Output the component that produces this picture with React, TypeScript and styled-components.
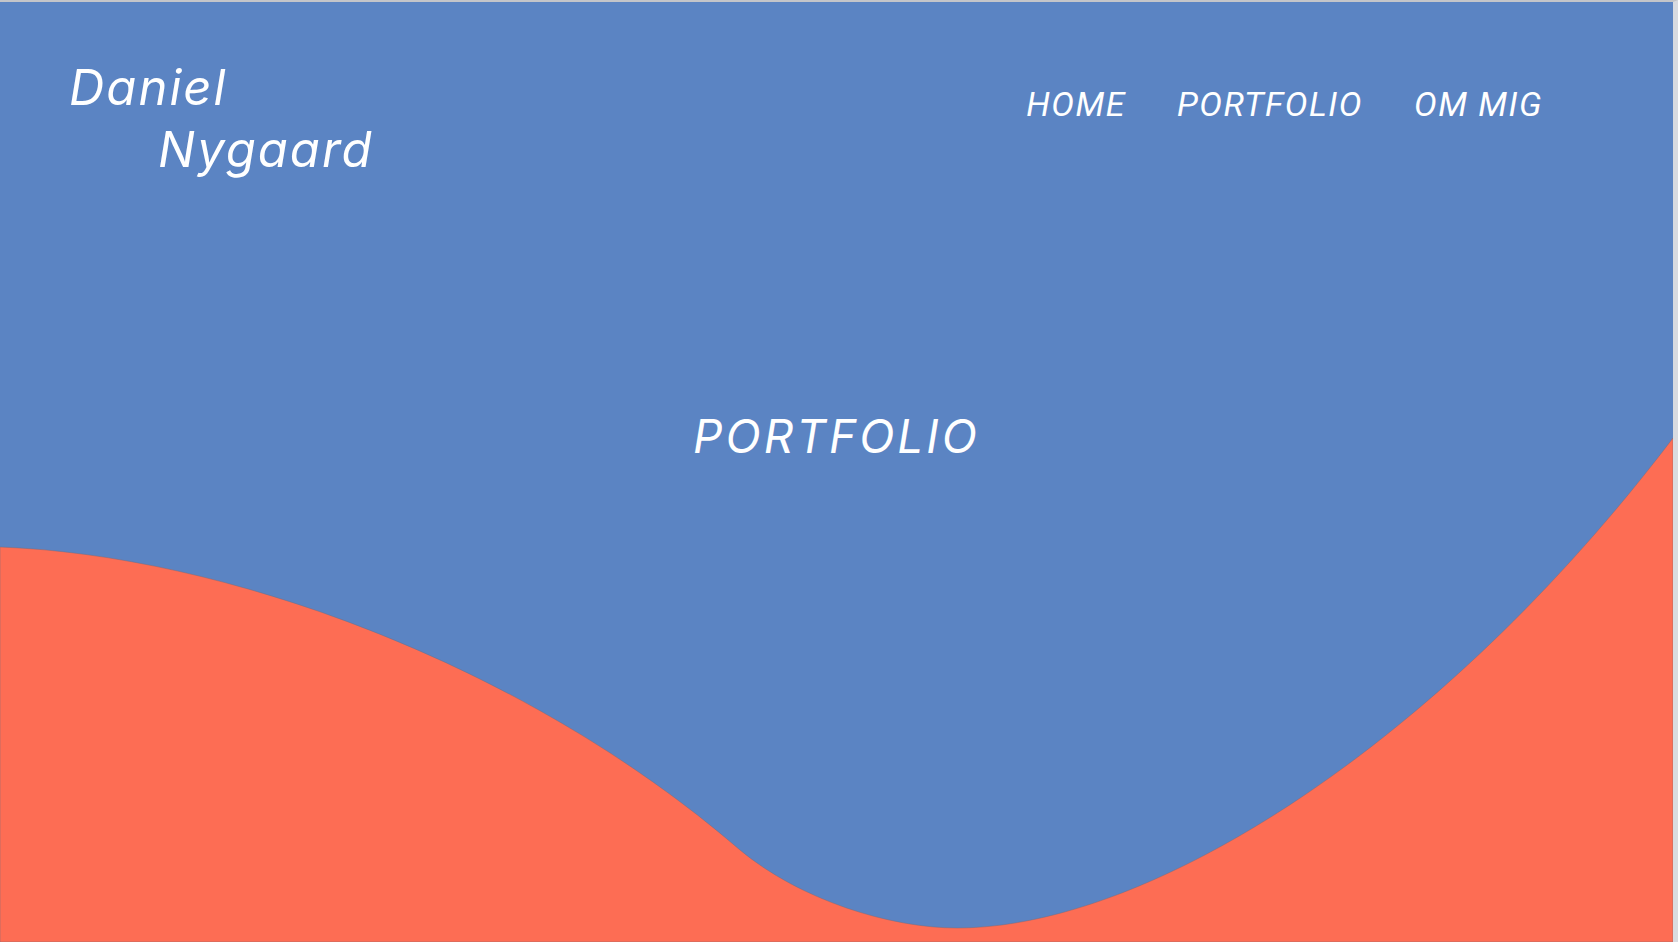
import styled, { createGlobalStyle } from "styled-components";

const GlobalStyle = createGlobalStyle`
  html, body {
    margin: 0;
    padding: 0;
    overflow: hidden;
  }
  * {
    box-sizing: border-box;
  }
`;

const Page = styled.div`
  position: relative;
  width: 100%;
  height: 100vh;
  overflow: hidden;
  background: #5b84c3;
  border-top: 2px solid #c4c5c9;
  border-right: 5px solid #d9dbe0;
  font-family: Inter, "Open Sans", sans-serif;
  color: #ffffff;
`;

// decorative background wave, sits under the content
const Wave = styled.svg`
  position: absolute;
  left: 0;
  bottom: 0;
  width: 100%;
  height: 100%;
  display: block;
`;

const Content = styled.div`
  position: relative;
  z-index: 1;
  display: flex;
  flex-direction: column;
`;

const Header = styled.header`
  display: flex;
  justify-content: space-between;
  align-items: flex-start;
  padding: 55px 130px 0 69px;
`;

const Logo = styled.div`
  display: flex;
  flex-direction: column;
  font-size: 49px;
  font-style: italic;
  letter-spacing: 2px;
  line-height: 62px;
`;

const LogoLine = styled.span<{ $indent?: number }>`
  padding-left: ${(p) => p.$indent || 0}px;
`;

const Nav = styled.nav`
  display: flex;
  gap: 51px;
  padding-top: 27px;
`;

const NavLink = styled.a`
  font-family: Roboto, sans-serif;
  font-size: 34px;
  font-style: italic;
  letter-spacing: 1.5px;
  color: #ffffff;
  text-decoration: none;
`;

const Hero = styled.h1`
  margin: 0;
  padding-top: 227px;
  text-align: center;
  font-size: 46px;
  font-weight: 400;
  font-style: italic;
  letter-spacing: 3px;
`;

export default function App() {
  return (
    <>
      <GlobalStyle />
      <Page>
        <Wave viewBox="0 2 1673 940" preserveAspectRatio="none">
          <path
            d="M0,547 C220,555 520,660 740,850 C800,900 890,928 957,928 C1150,928 1440,745 1673,438 L1673,942 L0,942 Z"
            fill="#fd6d54"
            stroke="#7a6a78"
            strokeOpacity="0.45"
            strokeWidth="1"
          />
        </Wave>
        <Content>
          <Header>
            <Logo>
              <LogoLine>Daniel</LogoLine>
              <LogoLine $indent={89}>Nygaard</LogoLine>
            </Logo>
            <Nav>
              <NavLink href="#">HOME</NavLink>
              <NavLink href="#">PORTFOLIO</NavLink>
              <NavLink href="#">OM MIG</NavLink>
            </Nav>
          </Header>
          <Hero>PORTFOLIO</Hero>
        </Content>
      </Page>
    </>
  );
}
